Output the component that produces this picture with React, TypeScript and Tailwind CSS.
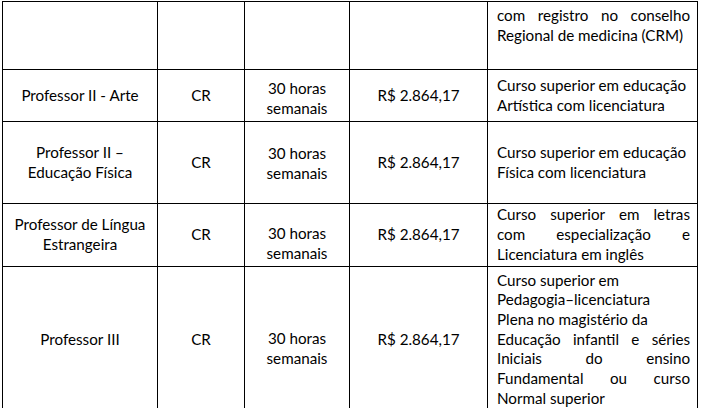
const rows = [
  {
    h: "h-[68px]",
    cargo: [] as string[],
    vagas: "",
    carga: [] as string[],
    venc: "",
    req: [
      { t: "com registro no conselho", j: true },
      { t: "Regional de medicina (CRM)", j: false },
    ],
    top: true,
  },
  {
    h: "h-[52px]",
    cargo: ["Professor II - Arte"],
    vagas: "CR",
    carga: ["30 horas", "semanais"],
    cargaPad: "pt-[6px]",
    venc: "R$ 2.864,17",
    req: [
      { t: "Curso superior em educação", j: false },
      { t: "Artística com licenciatura", j: false },
    ],
  },
  {
    h: "h-[82px]",
    cargo: ["Professor II –", "Educação Física"],
    vagas: "CR",
    carga: ["30 horas", "semanais"],
    cargaPad: "pt-[2px]",
    venc: "R$ 2.864,17",
    req: [
      { t: "Curso superior em educação", j: false },
      { t: "Física com licenciatura", j: false },
    ],
  },
  {
    h: "h-[63px]",
    cargo: ["Professor de Língua", "Estrangeira"],
    vagas: "CR",
    carga: ["30 horas", "semanais"],
    cargaPad: "pt-[18px]",
    venc: "R$ 2.864,17",
    req: [
      { t: "Curso superior em letras", j: true },
      { t: "com especialização e", j: true },
      { t: "Licenciatura em inglês", j: false },
    ],
  },
  {
    h: "h-[146px]",
    cargo: ["Professor III"],
    vagas: "CR",
    carga: ["30 horas", "semanais"],
    cargaPad: "pt-[18px]",
    venc: "R$ 2.864,17",
    req: [
      { t: "Curso superior em", j: false },
      { t: "Pedagogia–licenciatura", j: false },
      { t: "Plena no magistério da", j: false },
      { t: "Educação infantil e séries", j: true },
      { t: "Iniciais do ensino", j: true },
      { t: "Fundamental ou curso", j: true },
      { t: "Normal superior", j: false },
    ],
  },
];

export default function App() {
  return (
    <div className="h-[408px] w-[702px] overflow-hidden bg-white pl-[2px] pt-[1px] font-['Lato',sans-serif] text-[15.2px] leading-[19.7px] text-black">
      <table className="table-fixed border-collapse">
        <colgroup>
          <col className="w-[155px]" />
          <col className="w-[87px]" />
          <col className="w-[105px]" />
          <col className="w-[138px]" />
          <col className="w-[210px]" />
        </colgroup>
        <tbody>
          {rows.map((r, i) => (
            <tr key={i} className={r.h}>
              <td className="border border-black p-0 text-center align-middle">
                {r.cargo.map((l) => (
                  <div key={l} className="whitespace-nowrap">{l}</div>
                ))}
              </td>
              <td className="border border-black p-0 text-center align-middle">{r.vagas}</td>
              <td className={`border border-black p-0 text-center align-middle ${r.cargaPad ?? ""}`}>
                {r.carga.map((l) => (
                  <div key={l}>{l}</div>
                ))}
              </td>
              <td className="border border-black p-0 text-center align-middle whitespace-nowrap">{r.venc}</td>
              <td
                className={`border border-black pl-[9px] pr-[7px] ${
                  r.top ? "pt-[4px] align-top" : "py-0 align-middle"
                }`}
              >
                {r.req.map((l) =>
                  l.j ? (
                    <div key={l.t} className="whitespace-nowrap text-justify [text-align-last:justify]">
                      {l.t}
                    </div>
                  ) : (
                    <div key={l.t} className="whitespace-nowrap">{l.t}</div>
                  )
                )}
              </td>
            </tr>
          ))}
        </tbody>
      </table>
    </div>
  );
}
